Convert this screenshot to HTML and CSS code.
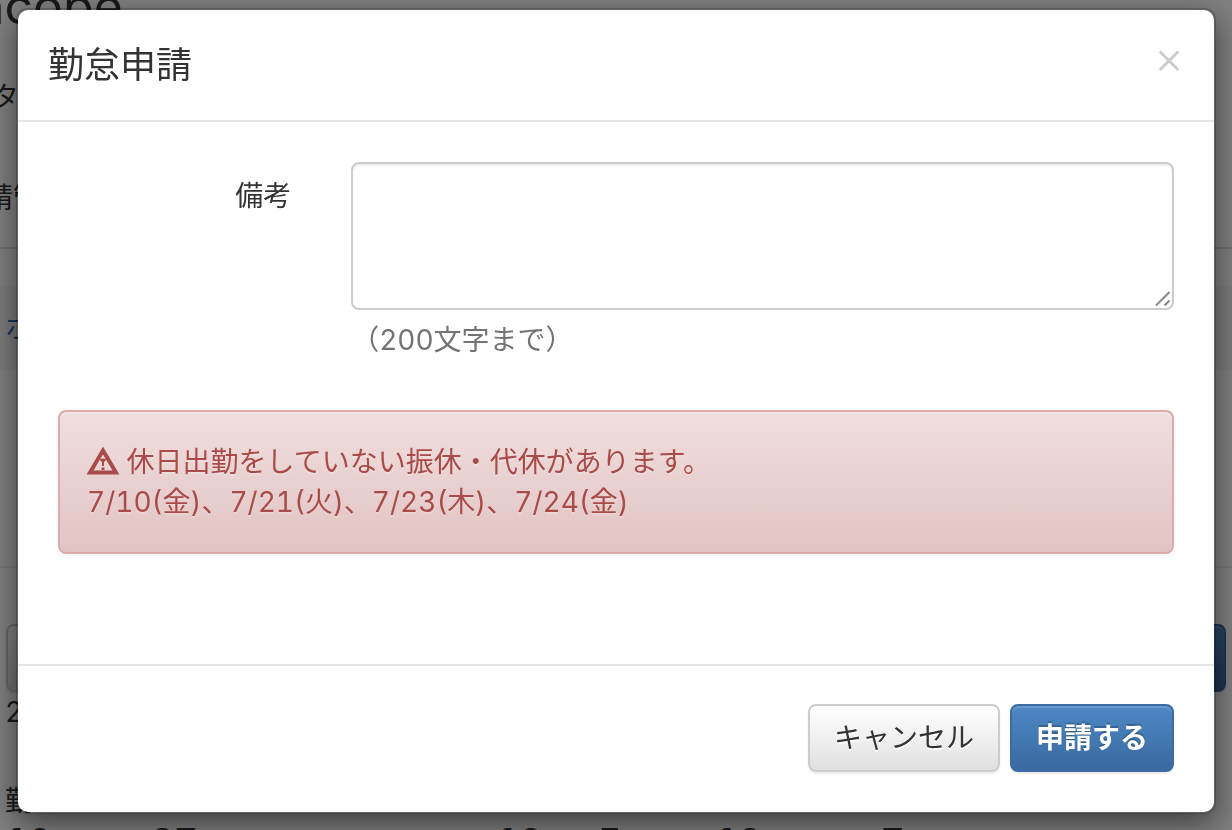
FILE: index.html
```html
<!DOCTYPE html>
<html lang="ja">
<head>
<meta charset="utf-8">
<title>勤怠申請</title>
<link rel="stylesheet" href="styles.css">
</head>
<body>
<div class="page" inert>
  <div class="logo">ncope</div>
  <div class="page-heading">タ</div>
  <div class="page-tabs">申請管理</div>
  <nav class="crumbs"><a href="#">ホ</a></nav>
  <div class="page-panel"></div>
  <div class="page-actions">
    <button class="btn btn-default" type="button" aria-label="戻る"></button>
    <button class="btn btn-primary" type="button" aria-label="申請"></button>
  </div>
  <div class="page-year">2</div>
  <div class="page-section">勤</div>
  <div class="totals"><b>10</b><b>27</b><b>10</b><b>5</b><b>10</b><b>7</b></div>
</div>

<div class="backdrop">
  <form class="modal" role="dialog" aria-modal="true" aria-labelledby="modal-title">
    <header class="modal-header">
      <h1 class="modal-title" id="modal-title">勤怠申請</h1>
      <button class="close" type="button" aria-label="閉じる">×</button>
    </header>
    <div class="modal-body">
      <div class="field">
        <label class="field-label" for="note">備考</label>
        <div class="field-control">
          <div class="note-wrap">
            <textarea class="note" id="note" aria-describedby="note-help"></textarea>
            <svg class="grip" viewBox="0 0 16 16" aria-hidden="true"><path d="M1 14.500L14.500 1M9.500 14.500L14.500 9.500"/></svg>
          </div>
          <p class="help" id="note-help">（200文字まで）</p>
        </div>
      </div>
      <div class="alert" role="alert">
        <svg class="warn" viewBox="0 0 32 28" aria-hidden="true">
          <path class="warn-frame" d="M16 3.500L29 25.500H3Z"/>
          <path class="warn-mark" d="M12.500 12.500q3.500-2 7 0l-2.500 2.500v4h-2v-4zM14.500 20.500h3v2.500h-3z"/>
        </svg>
        休日出勤をしていない振休・代休があります。<br>7/10(金)、7/21(火)、7/23(木)、7/24(金)
      </div>
    </div>
    <footer class="modal-footer">
      <button class="btn btn-default" type="button">キャンセル</button>
      <button class="btn btn-primary" type="submit">申請する</button>
    </footer>
  </form>
</div>
</body>
</html>
```
FILE: styles.css
```css
* { box-sizing: border-box; }

body {
  margin: 0;
  height: 100vh;
  overflow: hidden;
  background: #fff;
  color: #333;
  font: 28px/40px Inter, "Noto Sans CJK JP", sans-serif;
  font-feature-settings: "tnum";
}

/* Page under the dialog */
.page { height: 100vh; overflow: hidden; white-space: nowrap; }
.logo { height: 76px; margin: -24px 0 25px -25px; font-size: 50px; line-height: 60px; }
.page-heading { margin-left: -9px; }
.page-tabs {
  margin: 61px 0 0;
  height: 71px;
  border-bottom: 2px solid #dde3e3;
  text-indent: -43px;
}
.crumbs { margin-top: 37px; padding: 22px 5px; background: #f5f5f5; }
.crumbs a { color: #3367b7; text-decoration: none; }
.page-panel { height: 198px; border-bottom: 2px solid #eee; }
.page-actions { display: flex; justify-content: space-between; padding: 56px 6px 0; }
.page-year { padding-left: 5px; }
.page-section { margin-top: 49px; padding-left: 5px; }
.totals {
  display: grid;
  grid-template-columns: 146fr 345fr 102fr 117fr 166fr 351fr;
  padding-left: 5px;
  font-size: 36px;
  line-height: 40px;
}

/* Dialog */
.backdrop { position: fixed; inset: 0; overflow: hidden; background: rgba(0, 0, 0, .5); }
.modal {
  margin: 8px 16px;
  border: 2px solid rgba(0, 0, 0, .2);
  border-radius: 12px;
  background: #fff;
  background-clip: padding-box;
  box-shadow: 0 10px 30px rgba(0, 0, 0, .5);
}
.modal-header {
  display: flex;
  align-items: flex-start;
  justify-content: space-between;
  padding: 30px;
  border-bottom: 2px solid #e5e5e5;
}
.modal-title { margin: 0; font-size: 36px; line-height: 50px; font-weight: 400; }
.close {
  padding: 0;
  border: 0;
  background: none;
  color: #ccc;
  font: 300 46px/34px Inter, sans-serif;
}
.modal-body { padding: 40px 40px 110px; }
.field {
  display: grid;
  grid-template-columns: minmax(0, 17fr) minmax(0, 60fr);
  column-gap: 60px;
}
.field-label { padding-top: 14px; text-align: right; }
.note-wrap { position: relative; }
.note {
  display: block;
  width: 100%;
  height: 148px;
  padding: 12px 24px;
  border: 2px solid #ccc;
  border-radius: 8px;
  box-shadow: inset 0 2px 2px rgba(0, 0, 0, .075);
  background: #fff;
  color: #555;
  font: inherit;
  resize: none;
}
.grip {
  position: absolute;
  right: 3px;
  bottom: 3px;
  width: 16px;
  height: 16px;
  fill: none;
  stroke: #888;
  stroke-width: 2;
}
.help { margin: 10px 0 0; color: #737373; }
.alert {
  margin-top: 50px;
  padding: 30px 27px;
  border: 2px solid #dcabab;
  border-radius: 8px;
  background: linear-gradient(#f0dede, #e2c3c3);
  box-shadow: inset 0 2px 0 rgba(255, 255, 255, .25), 0 2px 4px rgba(0, 0, 0, .05);
  color: #a94c49;
  text-shadow: 0 2px 0 rgba(255, 255, 255, .2);
}
.warn { width: 32px; height: 28px; vertical-align: -3px; }
.warn-frame { fill: none; stroke: #a94c49; stroke-width: 4; }
.warn-mark { fill: #a94c49; }
.modal-footer {
  display: flex;
  justify-content: flex-end;
  gap: 10px;
  padding: 38px 40px 40px;
  border-top: 2px solid #e5e5e5;
}
.btn {
  height: 68px;
  padding: 0 24px;
  border: 2px solid #ccc;
  border-radius: 8px;
  font: inherit;
  box-shadow: inset 0 2px 0 rgba(255, 255, 255, .15), 0 2px 2px rgba(0, 0, 0, .075);
}
.btn-default {
  background: linear-gradient(#fff, #e0e0e0);
  color: #333;
  text-shadow: 0 2px 0 #fff;
}
.btn-primary {
  border-color: #3a6ba3;
  background: linear-gradient(#4d89c5, #3a699f);
  color: #fff;
  font-weight: 700;
  text-shadow: 0 -2px 0 rgba(0, 0, 0, .2);
}
```
